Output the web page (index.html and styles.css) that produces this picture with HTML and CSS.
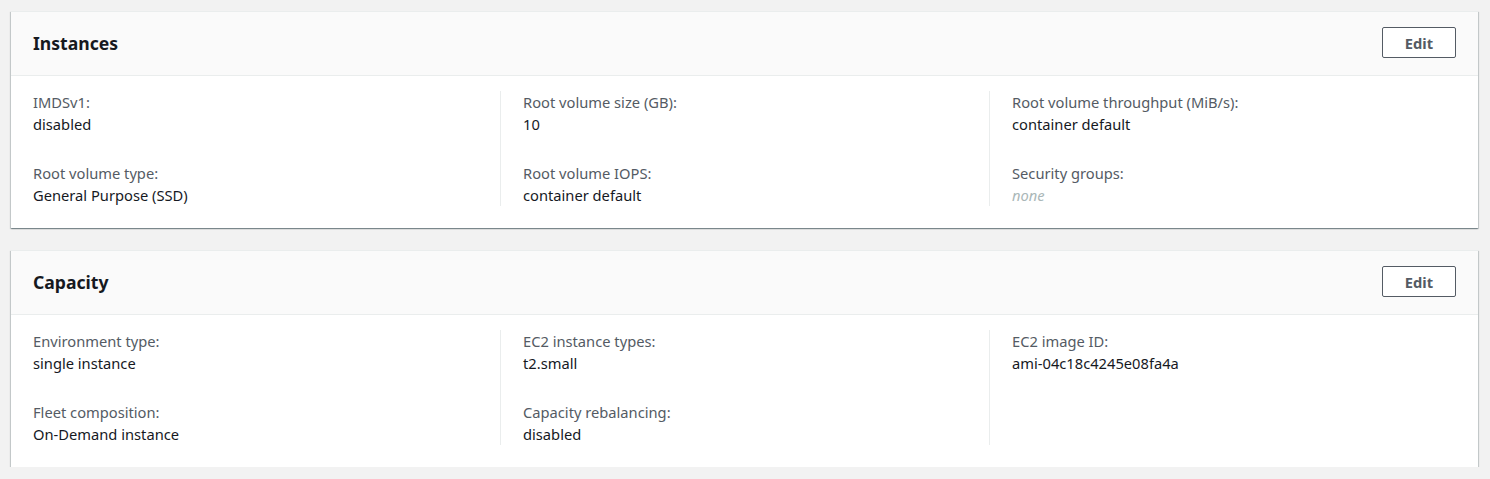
FILE: index.html
```html
<!DOCTYPE html>
<html>
<head>
<meta charset="utf-8">
<link rel="stylesheet" href="styles.css">
</head>
<body>
<div class="page">
  <section class="card">
    <div class="card-header">
      <h2 class="card-title">Instances</h2>
      <button class="btn">Edit</button>
    </div>
    <div class="card-body">
      <div class="col">
        <div class="kv"><div class="label">IMDSv1:</div><div class="value">disabled</div></div>
        <div class="kv"><div class="label">Root volume type:</div><div class="value">General Purpose (SSD)</div></div>
      </div>
      <div class="col">
        <div class="kv"><div class="label">Root volume size (GB):</div><div class="value">10</div></div>
        <div class="kv"><div class="label">Root volume IOPS:</div><div class="value">container default</div></div>
      </div>
      <div class="col">
        <div class="kv"><div class="label">Root volume throughput (MiB/s):</div><div class="value">container default</div></div>
        <div class="kv"><div class="label">Security groups:</div><div class="value empty">none</div></div>
      </div>
    </div>
  </section>
  <section class="card">
    <div class="card-header">
      <h2 class="card-title">Capacity</h2>
      <button class="btn">Edit</button>
    </div>
    <div class="card-body">
      <div class="col">
        <div class="kv"><div class="label">Environment type:</div><div class="value">single instance</div></div>
        <div class="kv"><div class="label">Fleet composition:</div><div class="value">On-Demand instance</div></div>
      </div>
      <div class="col">
        <div class="kv"><div class="label">EC2 instance types:</div><div class="value">t2.small</div></div>
        <div class="kv"><div class="label">Capacity rebalancing:</div><div class="value">disabled</div></div>
      </div>
      <div class="col">
        <div class="kv"><div class="label">EC2 image ID:</div><div class="value">ami-04c18c4245e08fa4a</div></div>
      </div>
    </div>
  </section>
</div>
</body>
</html>
```
FILE: styles.css
```css
* { box-sizing: border-box; }
html, body { margin: 0; padding: 0; background: #f2f2f2; }
body {
  font-family: "Noto Sans", "Open Sans", Arial, sans-serif;
  font-size: 14.7px;
  line-height: 22px;
  color: #16191f;
}
.page {
  padding: 11px 12px 0 11px;
  display: flex;
  flex-direction: column;
  gap: 22px;
}
.card {
  background: #fff;
  border-top: 1px solid #eaeded;
  box-shadow: 0 1px 1px 0 rgba(0,28,36,.3), 1px 1px 1px 0 rgba(0,28,36,.15), -1px 1px 1px 0 rgba(0,28,36,.15);
}
.card-header {
  height: 64px;
  background: #fafafa;
  border-bottom: 1px solid #eaeded;
  display: flex;
  align-items: center;
  justify-content: space-between;
  padding: 0 22px 2px 22px;
}
.card-title {
  margin: 0;
  font-size: 17.6px;
  font-weight: 700;
  line-height: 22px;
  color: #16191f;
}
.btn {
  width: 74px;
  height: 31px;
  background: #fff;
  border: 1px solid #545b64;
  border-radius: 2px;
  font-family: inherit;
  font-size: 14.7px;
  font-weight: 700;
  color: #545b64;
  padding: 0;
}
.card-body {
  display: grid;
  grid-template-columns: 1fr 1fr 1fr;
  padding: 15px 0 22px 0;
}
.col {
  padding-left: 22px;
  display: flex;
  flex-direction: column;
  gap: 27px;
}
.col + .col { border-left: 1px solid #eaeded; }
.label { color: #545b64; }
.value { color: #16191f; }
.value.empty { color: #aab7b8; font-style: italic; }
```
